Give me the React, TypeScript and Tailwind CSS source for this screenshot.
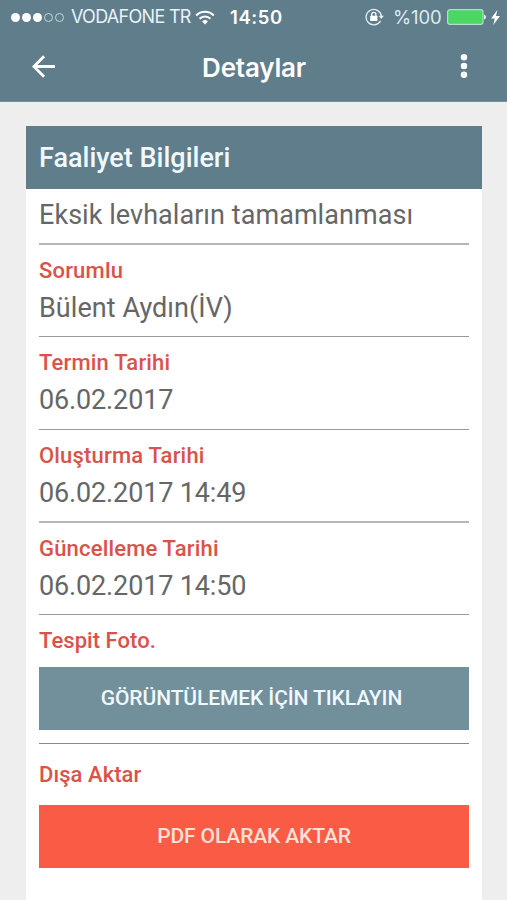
import type { ReactNode } from "react";

const STATUS_DOTS = [true, true, true, false, false];

function StatusBar() {
  return (
    <div className="flex h-[34px] items-center pr-[7px] pl-[11px] font-['Inter',sans-serif] text-[18px] leading-none">
      <div className="flex gap-[2px]">
        {STATUS_DOTS.map((on, i) => (
          <span
            key={i}
            className={
              on
                ? "size-[9px] rounded-full bg-white"
                : "size-[9px] rounded-full border border-[#c3d6df]"
            }
          />
        ))}
      </div>
      <span className="ml-[7px] w-[121px] whitespace-nowrap tracking-[-0.7px] text-[#e8f3f8]">VODAFONE TR</span>
      <svg className="ml-[3px] h-[15px] w-[20px]" viewBox="0 0 20 15" fill="none" stroke="#fff">
        <path d="M1.2 5.4a12.4 12.4 0 0 1 17.6 0" strokeWidth="2.1" />
        <path d="M4.6 8.8a7.6 7.6 0 0 1 10.8 0" strokeWidth="2.1" />
        <path d="M10 14.4l-2.9-2.9a4.1 4.1 0 0 1 5.8 0z" fill="#fff" stroke="none" />
      </svg>
      <span className="ml-[15px] w-[54px] whitespace-nowrap text-[18.5px] font-semibold tracking-[0.6px] text-white">14:50</span>
      <div className="ml-auto flex items-center">
        <svg className="h-[18px] w-[19px]" viewBox="0 0 19 18" fill="none">
          <path d="M15.6 12.7A7.7 7.7 0 1 1 16.4 8" stroke="#e3eff4" strokeWidth="1.3" />
          <path d="M13.7 7.7h5.1l-2.5 3.4z" fill="#e8f3f8" />
          <rect x="5.2" y="7.7" width="7.2" height="5.4" rx="0.5" fill="#fff" />
          <path d="M6.7 8V6.5a2.1 2.1 0 0 1 4.2 0V8" stroke="#fff" strokeWidth="1.3" />
        </svg>
        <span className="ml-[9px] w-[48px] whitespace-nowrap text-[18.5px] tracking-[-0.1px] text-[#dcebf2]">%100</span>
        <svg className="ml-[6px] h-[18px] w-[39px]" viewBox="0 0 39 18" fill="none">
          <rect x="0.6" y="1.6" width="35.4" height="14.8" rx="2.4" fill="#4bd763" stroke="#b5dcc8" strokeWidth="1.2" />
          <path d="M37 6.4q2 .5 2 2.6t-2 2.6z" fill="#e8f3f8" />
        </svg>
        <svg className="ml-[5px] h-[15px] w-[9px]" viewBox="0 0 9 15" fill="#fff">
          <path d="M6.4 0 0 8.4h3.7L2.3 15 9 6H5z" />
        </svg>
      </div>
    </div>
  );
}

function AppBar() {
  return (
    <div className="grid h-[67px] grid-cols-[1fr_auto_1fr] items-center pr-[39px] pl-[32px]">
      <svg className="mb-[3px] h-[23px] w-[23px]" viewBox="0 0 24 24" fill="none" stroke="#fff" strokeWidth="2.9">
        <path d="M24 12H2.2M12.6 1.3 2 12l10.6 10.7" />
      </svg>
      <h1 className="ml-[8px] font-['Inter',sans-serif] text-[26px] leading-[32px] font-semibold tracking-[-0.2px] text-white">Detaylar</h1>
      <svg className="mb-[3px] h-[26px] w-[8px] justify-self-end" viewBox="0 0 8 26" fill="#fff">
        <circle cx="4" cy="4.2" r="3.2" />
        <circle cx="4" cy="13" r="3.2" />
        <circle cx="4" cy="21.8" r="3.2" />
      </svg>
    </div>
  );
}

function Label({ children }: { children: ReactNode }) {
  return <div className="text-[22px] leading-[28px] font-medium tracking-[0.18px] text-[#d9534a]">{children}</div>;
}

function DateValue({ children }: { children: ReactNode }) {
  return <div className="mt-[7px] text-[27px] leading-[32px] tracking-[-0.14px] text-[#666]">{children}</div>;
}

export default function App() {
  return (
    <div className="flex h-[900px] w-[507px] flex-col overflow-hidden bg-[#eee] font-['Roboto',sans-serif]">
      <header className="h-[102px] shrink-0 border-b border-[#78909b] bg-[#607d8b]">
        <StatusBar />
        <AppBar />
      </header>

      <main className="mt-[24px] mr-[25px] ml-[26px] flex-1 bg-white">
        <h2 className="flex h-[63px] items-center bg-[#607d8b] pt-px pl-[13px] text-[27px] font-medium text-[#f0f9ff]">
          Faaliyet Bilgileri
        </h2>
        <div className="px-[13px] whitespace-nowrap">
          <section className="h-[56px] border-b-2 border-[#b6b6b6] pt-[10px]">
            <div className="text-[27px] leading-[32px] tracking-[0.05px] text-[#666]">Eksik levhaların tamamlanması</div>
          </section>
          <section className="h-[92px] border-b border-[#999] pt-[12px]">
            <Label>Sorumlu</Label>
            <div className="mt-[7px] text-[27px] leading-[32px] tracking-[0.05px] text-[#666]">Bülent Aydın(İV)</div>
          </section>
          <section className="h-[93px] border-b border-[#999] pt-[12px]">
            <Label>Termin Tarihi</Label>
            <DateValue>06.02.2017</DateValue>
          </section>
          <section className="h-[93px] border-b-2 border-[#b6b6b6] pt-[12px]">
            <Label>Oluşturma Tarihi</Label>
            <DateValue>06.02.2017 14:49</DateValue>
          </section>
          <section className="h-[92px] border-b border-[#999] pt-[12px]">
            <Label>Güncelleme Tarihi</Label>
            <DateValue>06.02.2017 14:50</DateValue>
          </section>
          <section className="h-[129px] border-b border-[#888] pt-[12px]">
            <Label><span className="tracking-[0.05px]">Tespit Foto.</span></Label>
            <button className="mt-[12px] flex h-[63px] w-full items-center justify-center bg-[#728f9c] pt-px pr-[5px] text-[21px] font-medium tracking-[-0.1px] text-[#f0f9ff]">
              GÖRÜNTÜLEMEK İÇİN TIKLAYIN
            </button>
          </section>
          <section className="pt-[17px]">
            <Label><span className="tracking-[0.05px]">Dışa Aktar</span></Label>
            <button className="mt-[16px] flex h-[63px] w-full items-center justify-center bg-[#fa5b45] pt-px text-[21px] font-medium tracking-[-0.12px] text-[#ffe0da]">
              PDF OLARAK AKTAR
            </button>
          </section>
        </div>
      </main>
    </div>
  );
}
